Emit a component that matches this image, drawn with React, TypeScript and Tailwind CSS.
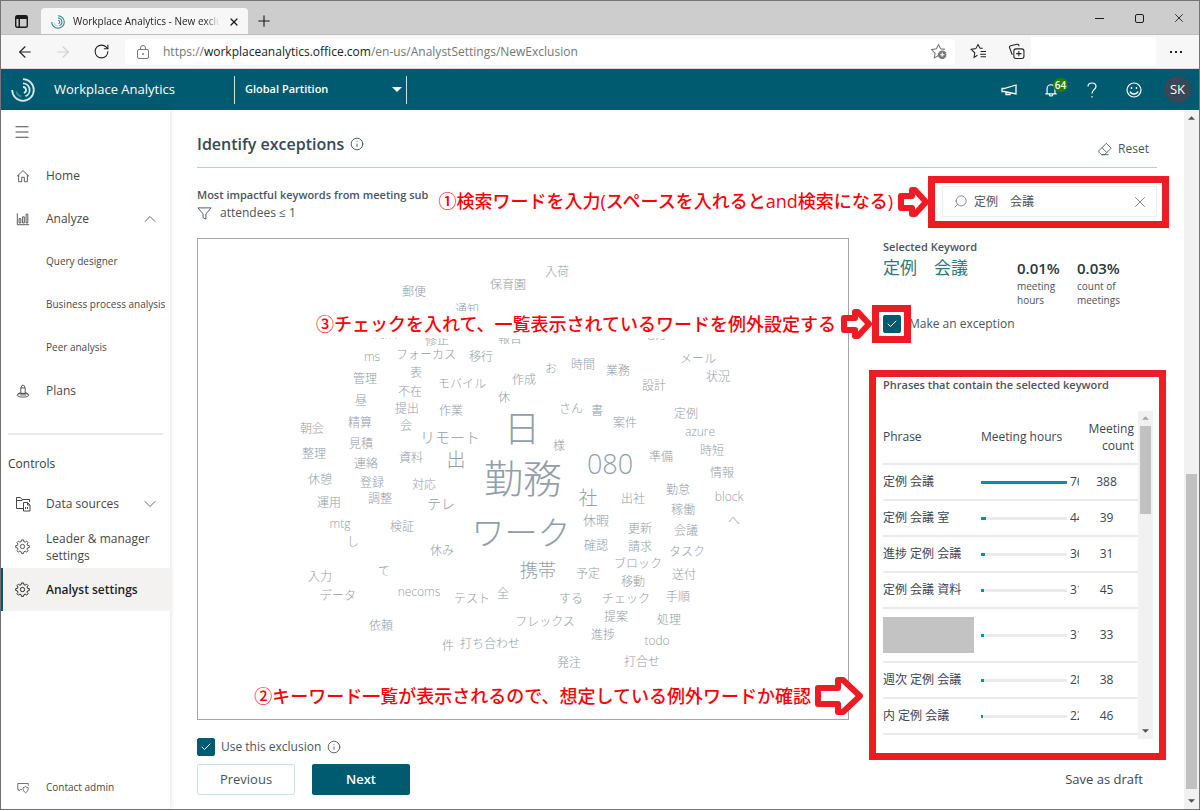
import { useState, ReactNode } from 'react';
import { Check, ChevronDown, ChevronUp, Info, Menu, Plus, RotateCw, Search, X, ArrowLeft, ArrowRight } from 'lucide-react';

type Word = { t: string; x: number; y: number; s?: number };

// x / y are the centre of each word on the 650 x 480 cloud
const WORDS: Word[] = [
    { t: '入荷', x: 359, y: 33 },
    { t: '保育園', x: 310, y: 46 },
    { t: '郵便', x: 216, y: 53 },
    { t: '通知', x: 269, y: 71 },
    { t: 'ms', x: 174, y: 118 },
    { t: 'フォーカス', x: 228, y: 116 },
    { t: '移行', x: 283, y: 118 },
    { t: '内訳', x: 187, y: 95 },
    { t: '修正', x: 239, y: 102 },
    { t: '報告', x: 312, y: 100 },
    { t: '地方', x: 457, y: 96 },
    { t: '管理', x: 167, y: 140 },
    { t: '表', x: 218, y: 134 },
    { t: '不在', x: 212, y: 153 },
    { t: 'モバイル', x: 264, y: 145 },
    { t: '作成', x: 326, y: 141 },
    { t: 'お', x: 353, y: 130 },
    { t: '休', x: 306, y: 159 },
    { t: '昼', x: 163, y: 162 },
    { t: '提出', x: 209, y: 170 },
    { t: '作業', x: 253, y: 172 },
    { t: '精算', x: 162, y: 184 },
    { t: '朝会', x: 114, y: 190 },
    { t: '会', x: 208, y: 187 },
    { t: 'リモート', x: 252, y: 198, s: 15 },
    { t: '見積', x: 163, y: 205 },
    { t: '整理', x: 116, y: 215 },
    { t: '連絡', x: 168, y: 225 },
    { t: '資料', x: 213, y: 219 },
    { t: '出', x: 258, y: 221, s: 19 },
    { t: '日', x: 324, y: 190, s: 36 },
    { t: '勤務', x: 325, y: 238, s: 39 },
    { t: 'ワーク', x: 323, y: 293, s: 33 },
    { t: '時間', x: 385, y: 126 },
    { t: '業務', x: 420, y: 132 },
    { t: '設計', x: 456, y: 147 },
    { t: 'メール', x: 500, y: 120 },
    { t: '状況', x: 520, y: 138 },
    { t: 'さん', x: 373, y: 170 },
    { t: '書', x: 399, y: 172 },
    { t: '案件', x: 427, y: 184 },
    { t: '定例', x: 488, y: 175 },
    { t: 'azure', x: 502, y: 193 },
    { t: '様', x: 361, y: 207 },
    { t: '080', x: 412, y: 224, s: 27 },
    { t: '準備', x: 463, y: 218 },
    { t: '時短', x: 514, y: 212 },
    { t: '情報', x: 524, y: 234 },
    { t: '勤怠', x: 480, y: 251 },
    { t: '稼働', x: 485, y: 271 },
    { t: 'block', x: 531, y: 258 },
    { t: 'へ', x: 536, y: 282 },
    { t: '社', x: 390, y: 259, s: 19 },
    { t: '出社', x: 435, y: 260 },
    { t: '休暇', x: 398, y: 281, s: 13 },
    { t: '更新', x: 442, y: 290 },
    { t: '会議', x: 488, y: 292 },
    { t: '確認', x: 398, y: 307 },
    { t: '請求', x: 442, y: 308 },
    { t: 'タスク', x: 489, y: 313 },
    { t: 'ブロック', x: 440, y: 325 },
    { t: '送付', x: 486, y: 336 },
    { t: '予定', x: 390, y: 335 },
    { t: '移動', x: 435, y: 343 },
    { t: '携帯', x: 340, y: 331, s: 18 },
    { t: 'チェック', x: 428, y: 360 },
    { t: '手順', x: 480, y: 358 },
    { t: 'する', x: 373, y: 360 },
    { t: '提案', x: 418, y: 378 },
    { t: '処理', x: 471, y: 381 },
    { t: '進捗', x: 405, y: 396 },
    { t: 'todo', x: 459, y: 402 },
    { t: '打合せ', x: 444, y: 423 },
    { t: '発注', x: 371, y: 424 },
    { t: 'フレックス', x: 347, y: 383 },
    { t: '全', x: 305, y: 355 },
    { t: 'テスト', x: 274, y: 360 },
    { t: 'necoms', x: 221, y: 353 },
    { t: '依頼', x: 183, y: 387 },
    { t: 'データ', x: 140, y: 357 },
    { t: '入力', x: 122, y: 338 },
    { t: 'て', x: 186, y: 333 },
    { t: 'し', x: 155, y: 303 },
    { t: '休み', x: 244, y: 312 },
    { t: '検証', x: 204, y: 288 },
    { t: 'mtg', x: 142, y: 285 },
    { t: '調整', x: 182, y: 260 },
    { t: '運用', x: 131, y: 264 },
    { t: '登録', x: 174, y: 244 },
    { t: '対応', x: 226, y: 246 },
    { t: 'テレ', x: 243, y: 265, s: 14 },
    { t: '休憩', x: 122, y: 241 },
    { t: '件', x: 250, y: 407 },
    { t: '打ち合わせ', x: 292, y: 405 },
];

const PHRASES = [
    { name: '定例 会議', hours: '76', bar: 86, count: 388 },
    { name: '定例 会議 室', hours: '44', bar: 5, count: 39 },
    { name: '進捗 定例 会議', hours: '36', bar: 4, count: 31 },
    { name: '定例 会議 資料', hours: '31', bar: 3, count: 45 },
    { name: '', hours: '31', bar: 3, count: 33 },
    { name: '週次 定例 会議', hours: '28', bar: 3, count: 38 },
    { name: '内 定例 会議', hours: '22', bar: 2, count: 46 },
];

function Logo({ className }: { className?: string }) {
    return (
        <svg viewBox="0 0 24 24" fill="none" stroke="currentColor" strokeWidth="1.8" className={className}>
            <path d="M1.200 12A10.800 10.800 0 1 0 12 1.200" />
            <path d="M12 5.300a6.700 6.700 0 0 1 2.500 12.900" />
            <path d="M5.300 13.500a6.700 6.700 0 0 0 5 5" opacity="0.300" />
            <path d="M12 9a3 3 0 0 1 .8 5.900" />
        </svg>
    );
}

function Icon({ children, className = 'w-[14px] h-[14px]' }: { children: ReactNode; className?: string }) {
    return (
        <svg viewBox="0 0 16 16" fill="none" stroke="currentColor" strokeWidth="1" className={className}>
            {children}
        </svg>
    );
}

const HomeIcon = () => (
    <Icon><path d="M1 8.500 8 1.800l7 6.700M3 7v7.500h3.500V9.500h3v5H13V7" /></Icon>
);

const ChartIcon = () => (
    <Icon><path d="M1.500 1.500v13H15M3.500 7.500h2v5h-2zM7.500 5.500h2v7h-2zM11.500 2.500h2v10h-2z" /></Icon>
);

const PlansIcon = () => (
    <Icon className="w-[14px] h-4">
        <path d="M5.500 11V4.500L7 1.500h2l1.500 3V11zM5.500 4.500h5M5 9.500l-3.500 2.500M11 9.500l3.500 2.500" />
        <ellipse cx="8" cy="12.800" rx="6.500" ry="2.200" />
        <path d="M4.500 12.500h7" />
    </Icon>
);

const FolderIcon = () => (
    <Icon className="w-4 h-4">
        <path d="M8 12.500H1.500v-11h4l1.500 2h7.500V6M1.500 4.500H7l1-1" />
        <path d="M8.500 6.500h4l2.500 2.500v6H8.500zM12.500 6.500V9H15M10.500 13v-2M12.500 13v-2" />
    </Icon>
);

const GearIcon = () => (
    <Icon className="w-[15px] h-[15px]">
        <circle cx="8" cy="8" r="2.300" />
        <path d="M6.900 1h2.200l.4 1.900 1.300.5 1.600-1.100 1.500 1.500-1.100 1.600.6 1.400 1.800.2v2.100l-1.800.4-.6 1.400 1.100 1.600-1.500 1.500-1.600-1.100-1.300.6-.4 1.800H6.900l-.4-1.800-1.300-.6L3.600 14l-1.500-1.500 1.100-1.600-.6-1.400L.8 9.100V7l1.800-.2.6-1.400-1.100-1.600 1.500-1.500 1.600 1.100 1.300-.5z" />
    </Icon>
);

const ContactIcon = () => (
    <Icon className="w-3 h-3">
        <path d="M6.500 10H4.500L2.500 12v-2H1V2h14v3" />
        <path d="M8 7.500c1.500 0 2.500-.5 3.500-1.500 1 1 2 1.500 3.500 1.500 0 3.500-1 5.500-3.500 7C9 13 8 11 8 7.500z" />
    </Icon>
);

// block arrow of the red notes
function NoteArrow({ large = false }: { large?: boolean }) {
    return large ? (
        <svg viewBox="0 0 48 38" className="w-12 h-[38px] shrink-0">
            <path d="M3 11h20V3l5 0 17 16-17 16h-5v-8H3z" fill="#fff" stroke="#ed1c24" strokeWidth="6" strokeLinejoin="round" />
        </svg>
    ) : (
        <svg viewBox="0 0 32 32" className="w-8 h-8 shrink-0">
            <path d="M4 10h11V4h3l11 12-11 12h-3v-6H4z" fill="#fff" stroke="#ed1c24" strokeWidth="6" strokeLinejoin="round" />
        </svg>
    );
}

function Note({ children, large = false }: { children: ReactNode; large?: boolean }) {
    return (
        <div className="flex items-center whitespace-nowrap">
            <span className="bg-white pr-1 text-[18px] leading-[27px] font-medium text-[#fb0007]">{children}</span>
            <NoteArrow large={large} />
        </div>
    );
}

function Tick({ id, checked, onChange }: { id: string; checked: boolean; onChange: (v: boolean) => void }) {
    return (
        <span className="grid shrink-0">
            <input id={id} type="checkbox" checked={checked} onChange={(e) => onChange(e.target.checked)}
                className="col-start-1 row-start-1 w-[18px] h-[18px] appearance-none rounded-[2px] border border-[#005b70] checked:bg-[#005b70]" />
            {checked && <Check strokeWidth={2} className="col-start-1 row-start-1 w-3 h-3 place-self-center text-white pointer-events-none" />}
        </span>
    );
}

function NavItem({ icon, label, small, active, trailing }: {
    icon?: ReactNode; label: string; small?: boolean; active?: boolean; trailing?: ReactNode;
}) {
    return (
        <a href="#" className={`flex items-center h-[43px] pr-2.5 border-l-2 ${active ? 'bg-[#f3f2f1] border-[#005b70] text-[#201f1e] font-semibold' : 'border-transparent text-[#4a4846]'}`}>
            <span className="w-[43px] flex justify-center pr-1 shrink-0">{icon}</span>
            <span className={`flex-1 leading-[17px] ${small ? 'text-[10px] whitespace-nowrap' : 'text-[12px]'}`}>{label}</span>
            {trailing}
        </a>
    );
}

function Arrow({ up = false, className = 'w-[7px] h-1' }: { up?: boolean; className?: string }) {
    return (
        <svg viewBox="0 0 8 4" className={className}>
            <path d={up ? 'M0 4 4 0l4 4z' : 'M0 0h8L4 4z'} fill="currentColor" />
        </svg>
    );
}

function BrowserChrome() {
    return (
        <>
            <div className="flex h-[34px] bg-[#cdcdcd] border-b border-[#bdbdbd] text-[#1b1b1b]">
                <button aria-label="Tab actions" className="w-10 flex items-center justify-center pt-2">
                    <svg viewBox="0 0 13 13" className="w-[13px] h-[13px]">
                        <rect x="0.700" y="0.700" width="11.600" height="11.600" rx="1.500" fill="none" stroke="currentColor" strokeWidth="1.400" />
                        <path d="M1 1h11v3H1zM3.500 4H5v8H3.500z" fill="currentColor" />
                    </svg>
                </button>
                <div className="flex items-center gap-2 mt-[7px] pt-px pl-2.5 pr-2 w-[207px] bg-[#f7f7f7] rounded-t">
                    <Logo className="w-[14px] h-[14px] shrink-0 text-[#2e7d91]" />
                    <span className="flex-1 overflow-hidden whitespace-nowrap text-[10px] text-[#222] mask-r-from-90%">Workplace Analytics - New exclusion</span>
                    <button aria-label="Close tab"><X strokeWidth={2.5} className="w-3 h-3" /></button>
                </div>
                <button aria-label="New tab" className="w-[31px] flex items-center justify-center pt-1.5"><Plus strokeWidth={1.5} className="w-[18px] h-[18px]" /></button>
                <div className="ml-auto flex items-center pt-px">
                    <button aria-label="Minimize" className="w-10 flex justify-center"><span className="w-[9px] h-px bg-[#1b1b1b]" /></button>
                    <button aria-label="Maximize" className="w-10 flex justify-center"><span className="w-[9px] h-[9px] border border-[#1b1b1b] rounded-[2px]" /></button>
                    <button aria-label="Close" className="w-10 flex justify-center"><X strokeWidth={1.5} className="w-[14px] h-[14px]" /></button>
                </div>
            </div>
            <div className="flex items-center h-[34px] bg-[#f7f7f7] border-b border-[#d8d8d8] text-[#222]">
                <button aria-label="Back" className="w-12 flex justify-center"><ArrowLeft strokeWidth={1.5} className="w-[18px] h-[18px]" /></button>
                <button aria-label="Forward" className="w-7 flex justify-center text-[#d0d0d0]"><ArrowRight strokeWidth={1.5} className="w-[18px] h-[18px]" /></button>
                <button aria-label="Refresh" className="w-12 flex justify-center"><RotateCw strokeWidth={1.5} className="w-[17px] h-[17px]" /></button>
                <div className="flex flex-1 items-center h-[26px] bg-white rounded pl-3 pr-2 text-[12px] text-[#767676]">
                    <svg viewBox="0 0 12 14" fill="none" stroke="currentColor" className="w-3 h-[14px]">
                        <rect x="0.500" y="4.500" width="11" height="9" rx="1.500" />
                        <path d="M3.500 4.500V3a2.500 2.500 0 0 1 5 0v1.500" />
                        <circle cx="6" cy="9" r="0.600" fill="currentColor" />
                    </svg>
                    <span className="flex-1 ml-3.5 whitespace-nowrap">https://<span className="text-[#222]">workplaceanalytics.office.com</span>/en-us/AnalystSettings/NewExclusion</span>
                    <button aria-label="Add to favorites">
                        <Icon className="w-[17px] h-[17px]">
                            <path d="M7.500 12 4 14l.8-4.500L1.500 6.300 6 5.500 8 1.500l2 4 4 .5" />
                            <circle cx="11.500" cy="11" r="3.500" fill="currentColor" />
                            <path d="M9.500 11h4M11.500 9v4" stroke="#fff" />
                        </Icon>
                    </button>
                </div>
                <button aria-label="Favorites" className="ml-[15px]">
                    <Icon className="w-[17px] h-[17px]">
                        <path d="M7 11.500 3.800 13.500l.7-4.300L1 6l4.500-.7L7.500 1.500l2 3.500H12M10 8h5M9.500 10.500H15M10 13h5" />
                    </Icon>
                </button>
                <button aria-label="Collections" className="ml-[21px] mr-1.5">
                    <Icon className="w-[17px] h-[17px]">
                        <rect x="5.500" y="5.500" width="9.500" height="9" rx="2" />
                        <path d="M10.200 7.500v5M7.700 10h5M4 11 1.500 4.500c-.3-1 0-1.700 1-2L8.500 1.200c1-.2 1.700.3 2 1.800" />
                    </Icon>
                </button>
                <div className="w-[125px] h-[29px] bg-white" />
                <button aria-label="Settings and more" className="w-[43px] flex justify-center gap-[3px] pr-1">
                    <span className="w-0.5 h-0.5 bg-[#222]" />
                    <span className="w-0.5 h-0.5 bg-[#222]" />
                    <span className="w-0.5 h-0.5 bg-[#222]" />
                </button>
            </div>
        </>
    );
}

function AppHeader() {
    return (
        <header className="flex items-center h-[41px] bg-[#005b70] text-white">
            <Logo className="ml-2.5 w-6 h-6 shrink-0 text-[#d5e8ec]" />
            <span className="ml-[19px] w-[180px] pt-px text-[13px] font-medium">Workplace Analytics</span>
            <div className="flex items-center w-[173px] h-7 border-x border-[#cfe1e5] pl-2.5 pr-1">
                <select aria-label="Partition" className="flex-1 appearance-none bg-transparent text-[11px] font-semibold text-white">
                    <option>Global Partition</option>
                </select>
                <Arrow className="w-2.5 h-[5px]" />
            </div>
            <div className="ml-auto flex items-center">
                <button aria-label="Announcements" className="mr-[27px]">
                    <Icon className="w-4 h-4">
                        <path d="M15 3v9L3 9.500H1v-3h2zM5 10v2.500h4l.5-2" strokeWidth="1.300" />
                    </Icon>
                </button>
                <button aria-label="Notifications" className="relative mr-[29px]">
                    <Icon className="w-[14px] h-4">
                        <path d="M1.500 12.500h13M3.500 12.500v-6a4.500 4.500 0 0 1 9 0v6M6 13c0 2.500 4 2.500 4 0" strokeWidth="1.300" />
                    </Icon>
                    <span className="absolute left-[9px] -top-1 w-[15px] h-[14px] rounded-full bg-[#218000] text-[10px] leading-[14px] font-semibold text-center">64</span>
                </button>
                <button aria-label="Help" className="mr-[29px]">
                    <svg viewBox="0 0 10 16" fill="none" stroke="currentColor" strokeWidth="1.200" className="w-2.5 h-4">
                        <path d="M1 4.500C1 2.300 2.700 1 5 1s4 1.300 4 3.500C9 7.500 5 7.500 5 11.500M5 14v1.500" />
                    </svg>
                </button>
                <button aria-label="Feedback" className="mr-[22px]">
                    <Icon className="w-4 h-4">
                        <circle cx="8" cy="8" r="7" strokeWidth="1.200" />
                        <path d="M4 9.500c1.200 3.300 6.800 3.300 8 0M5.500 5v2M10.500 5v2" strokeWidth="1.400" />
                    </Icon>
                </button>
                <button className="mr-2 w-[27px] h-[27px] rounded-full bg-[#394856] text-[13px] leading-[27px]">SK</button>
            </div>
        </header>
    );
}

function Sidebar() {
    return (
        <nav className="relative flex flex-col w-[169px] shrink-0 bg-white shadow-[0_0_6px_rgba(0,0,0,0.14)]">
            <button aria-label="Toggle navigation" className="h-11 pl-3 text-[#4a4846]"><Menu strokeWidth={1.5} className="w-[18px] h-[18px]" /></button>
            <NavItem icon={<HomeIcon />} label="Home" />
            <NavItem icon={<ChartIcon />} label="Analyze" trailing={<ChevronUp strokeWidth={1} className="w-5 h-5" />} />
            <NavItem label="Query designer" small />
            <NavItem label="Business process analysis" small />
            <NavItem label="Peer analysis" small />
            <NavItem icon={<PlansIcon />} label="Plans" />
            <hr className="mt-[21px] mx-[7px] border-t-2 border-[#ebebeb]" />
            <h2 className="mt-5 mb-[9px] pl-[7px] text-[12px] leading-[18px] font-medium text-[#3b3a39]">Controls</h2>
            <NavItem icon={<FolderIcon />} label="Data sources" trailing={<ChevronDown strokeWidth={1} className="w-5 h-5" />} />
            <NavItem icon={<GearIcon />} label="Leader & manager settings" />
            <NavItem icon={<GearIcon />} label="Analyst settings" active />
            <div className="mt-auto"><NavItem icon={<ContactIcon />} label="Contact admin" small /></div>
        </nav>
    );
}

function WordCloud() {
    return (
        <div className="flex justify-center h-[482px] border border-[#a6a6a6] overflow-hidden">
            <div className="relative w-[650px] shrink-0 text-[#929ea8] font-light">
                {WORDS.map((w) => (
                    <span key={`${w.t}-${w.x}-${w.y}`} className="absolute -translate-x-1/2 -translate-y-1/2 whitespace-nowrap leading-none"
                        style={{ left: w.x, top: w.y, fontSize: w.s ?? 12 }}>{w.t}</span>
                ))}
            </div>
        </div>
    );
}

function PhraseTable() {
    return (
        <div className="flex mt-[17px] mr-1">
            <table className="flex-1 mb-1 text-[12px] text-[#3b4652] border-collapse">
                <thead>
                    <tr className="h-[53px] border-b-2 border-[#ebebeb]">
                        <th className="w-[98px] text-left font-normal">Phrase</th>
                        <th className="w-[98px] text-left font-normal whitespace-nowrap">Meeting hours</th>
                        <th className="text-right font-normal leading-[17px] pr-1">Meeting count</th>
                    </tr>
                </thead>
                <tbody>
                    {PHRASES.map((p) => (
                        <tr key={p.name} className={`border-b-2 border-[#ebebeb] ${p.name ? 'h-9' : 'h-[54px]'}`}>
                            <td className="whitespace-nowrap">{p.name || <div className="w-[91px] h-9 bg-[#c3c3c3]" />}</td>
                            <td>
                                <div className="flex items-center w-[98px] overflow-hidden">
                                    <div className="w-[86px] h-[3px] bg-[#ebebeb] shrink-0">
                                        <div className="h-full bg-[#0090a8]" style={{ width: p.bar }} />
                                    </div>
                                    <span className="ml-[3px] w-[9px] overflow-hidden">{p.hours}</span>
                                </div>
                            </td>
                            <td className="text-center pr-1">{p.count}</td>
                        </tr>
                    ))}
                </tbody>
            </table>
            <div className="flex flex-col items-center w-[15px] bg-[#f1f1f1]">
                <Arrow up className="mt-[5px] w-[7px] h-1 text-[#a3a3a3]" />
                <div className="mt-1.5 w-[11px] h-[88px] bg-[#c1c1c1]" />
                <Arrow className="mt-auto mb-1.5 w-[7px] h-1 text-[#505050]" />
            </div>
        </div>
    );
}

export default function App() {
    const [query, setQuery] = useState('定例　会議');
    const [exception, setException] = useState(true);
    const [useExclusion, setUseExclusion] = useState(true);

    return (
        <div className="flex flex-col min-h-screen border border-[#757575] bg-white font-['Open_Sans','Noto_Sans_CJK_JP',sans-serif] text-[12px]">
            <BrowserChrome />
            <AppHeader />
            <div className="flex flex-1">
                <Sidebar />
                <main className="flex-1 flex flex-col min-w-0 px-[27px] pb-3.5">
                    <div className="flex items-center justify-between h-[58px] border-b border-[#a5d3de]">
                        <h1 className="flex items-center gap-1.5 pt-2.5 text-[16px] font-semibold text-[#394856]">
                            Identify exceptions
                            <Info strokeWidth={1.5} className="w-[14px] h-[14px]" />
                        </h1>
                        <button className="flex items-center gap-1.5 pt-5 pr-2 text-[#4a5560]">
                            <Icon className="w-[14px] h-[14px]">
                                <path d="M9.500 1.500 15 7l-7.500 7.500H4L1 11.500v-1.500zM4.500 6.500 10 12M4 14.500h8" />
                            </Icon>
                            Reset
                        </button>
                    </div>

                    <div className="flex flex-1 gap-[34px]">
                        <div className="flex-1 min-w-0 pt-[18px]">
                            <h2 className="text-[11px] leading-[18px] font-semibold text-[#4a5560] whitespace-nowrap">Most impactful keywords from meeting sub</h2>
                            <p className="flex items-center gap-2 mb-4 leading-[18px] text-[#4a5560]">
                                <Icon className="w-[15px] h-[15px]"><path d="M1 2h14L9.500 8.500V14l-3-1.500v-4z" /></Icon>
                                attendees ≤ 1
                            </p>
                            <WordCloud />
                            <div className="flex items-center gap-1.5 mt-[18px] text-[#4a5560]">
                                <Tick id="exclusion" checked={useExclusion} onChange={setUseExclusion} />
                                <label htmlFor="exclusion" className="leading-[18px]">Use this exclusion</label>
                                <Info strokeWidth={1.5} className="w-[14px] h-[14px]" />
                            </div>
                            <div className="flex mt-2 gap-[17px] text-[13px]">
                                <button className="w-[98px] h-[31px] border border-[#c5e3ea] rounded-[2px] text-[#4a5560]">Previous</button>
                                <button className="w-[98px] h-[31px] bg-[#005b70] rounded-[2px] text-white font-semibold">Next</button>
                            </div>
                        </div>

                        <aside className="flex flex-col w-[274px] shrink-0 pt-[18px] text-[#4a5560]">
                            <div className="relative flex items-center ml-auto w-[215px] h-[31px] border border-[#e3f1f5] pl-2.5 pr-[7px]">
                                <Search strokeWidth={1.5} className="w-[15px] h-[15px] -scale-x-100 text-[#7a858f]" />
                                <input aria-label="Search keywords" value={query} onChange={(e) => setQuery(e.target.value)}
                                    className="flex-1 min-w-0 ml-1.5 text-[12px] outline-none" />
                                <button aria-label="Clear search" onClick={() => setQuery('')}><X strokeWidth={1} className="w-[18px] h-[18px] text-[#5a6670]" /></button>
                                <div className="absolute -left-[15px] -right-[13px] -top-[11px] -bottom-3 border-[7px] border-[#ed1c24] pointer-events-none" />
                                <div className="absolute right-full mr-3.5">
                                    <Note>①検索ワードを入力(スペースを入れるとand検索になる)</Note>
                                </div>
                            </div>

                            <div className="flex mt-[21px]">
                                <div className="w-[134px]">
                                    <h3 className="text-[11px] leading-[18px] font-semibold whitespace-nowrap">Selected Keyword</h3>
                                    <p className="text-[17px] leading-6 text-[#2b7a78] whitespace-nowrap">定例　会議</p>
                                </div>
                                <div className="w-[60px] pt-[19px]">
                                    <p className="text-[15px] leading-[22px] font-semibold text-[#2b3640]">0.01%</p>
                                    <p className="w-11 text-[10px] leading-[14px]">meeting hours</p>
                                </div>
                                <div className="pt-[19px]">
                                    <p className="text-[15px] leading-[22px] font-semibold text-[#2b3640]">0.03%</p>
                                    <p className="w-11 text-[10px] leading-[14px]">count of meetings</p>
                                </div>
                            </div>

                            <div className="relative flex items-center gap-2 mt-2">
                                <Tick id="exception" checked={exception} onChange={setException} />
                                <label htmlFor="exception">Make an exception</label>
                                <div className="absolute -left-[11px] -top-2.5 w-[39px] h-[38px] border-[7px] border-[#ed1c24] pointer-events-none" />
                                <div className="absolute right-full mr-[11px]">
                                    <Note>③チェックを入れて、一覧表示されているワードを例外設定する</Note>
                                </div>
                            </div>

                            <div className="relative mt-[43px]">
                                <h3 className="text-[11px] leading-[18px] font-semibold">Phrases that contain the selected keyword</h3>
                                <PhraseTable />
                                <div className="absolute -left-3.5 -right-[9px] -top-1.5 -bottom-[21px] border-[7px] border-[#ed1c24] pointer-events-none" />
                                <div className="absolute right-full mr-5 bottom-6">
                                    <Note large>②キーワード一覧が表示されるので、想定している例外ワードか確認</Note>
                                </div>
                            </div>

                            <button className="mt-auto ml-auto mr-3.5 h-[31px] text-[13px] text-[#394856]">Save as draft</button>
                        </aside>
                    </div>
                </main>
                <div className="flex flex-col items-center w-[15px] bg-[#f1f1f1] text-[#505050]">
                    <Arrow up className="mt-1.5 w-[7px] h-1" />
                    <div className="mt-auto w-[11px] h-[315px] bg-[#c1c1c1]" />
                    <Arrow className="mt-2.5 mb-1.5 w-[7px] h-1" />
                </div>
            </div>
        </div>
    );
}
